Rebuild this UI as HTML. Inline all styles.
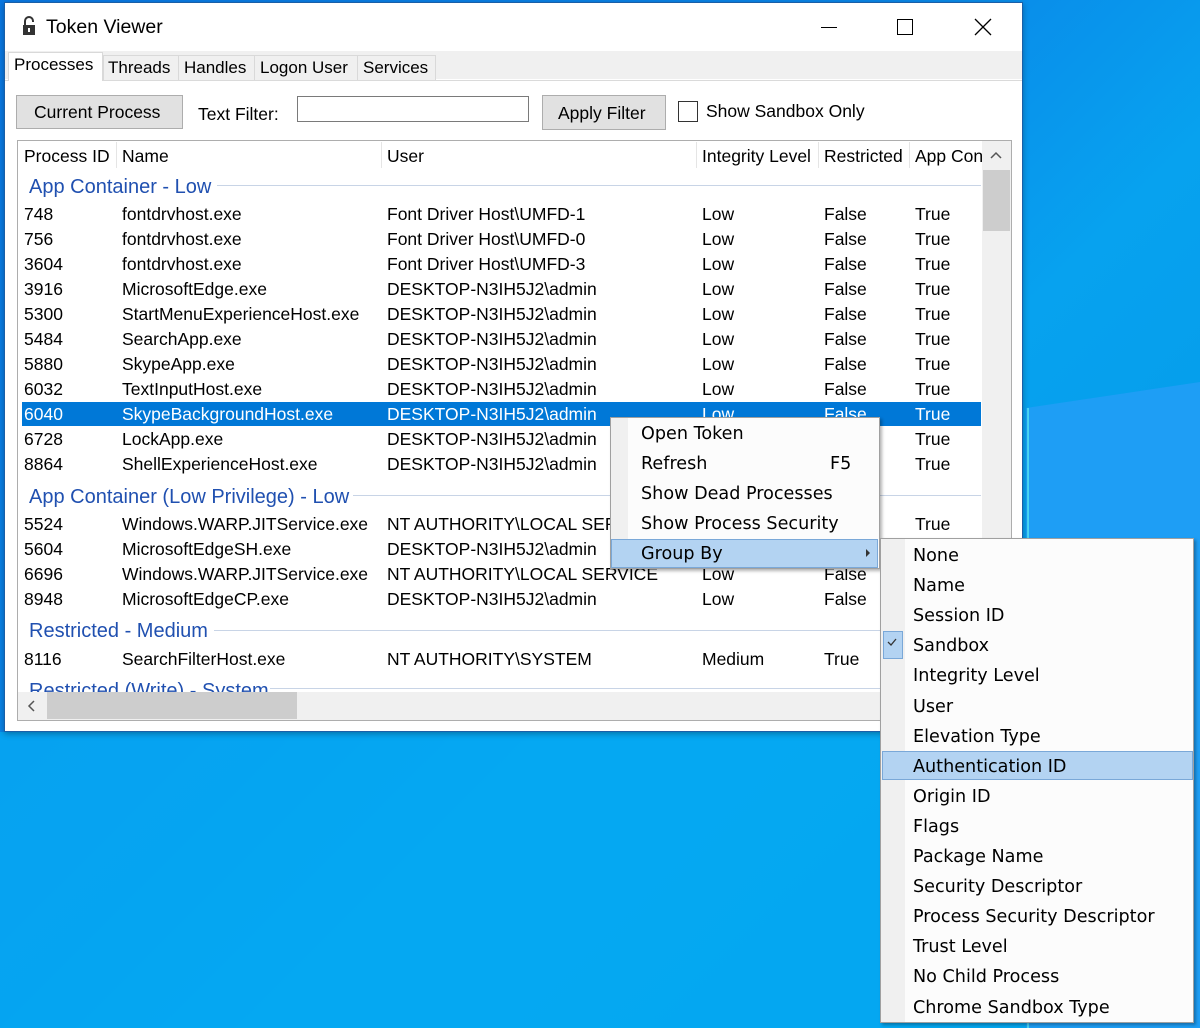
<!DOCTYPE html>
<html><head><style>
*{margin:0;padding:0;box-sizing:border-box}
body{width:1200px;height:1028px;overflow:hidden;position:relative;font-family:"Liberation Sans",sans-serif;background:linear-gradient(135deg,#0a78e2 0%,#0a86e8 40%,#07a2ef 60%,#0096e4 100%)}
.abs{position:absolute}
.t{position:absolute;font-size:17.5px;color:#000;white-space:nowrap;line-height:20px}
.g{position:absolute;font-size:20px;color:#2050b0;white-space:nowrap;line-height:22px}
.gl{position:absolute;height:1px;background:#c8d4e6}
.m{position:absolute;font-family:"DejaVu Sans","Liberation Sans",sans-serif;font-size:17.6px;color:#000;white-space:nowrap;line-height:22px}
</style></head><body>
<svg class="abs" style="left:0;top:0" width="1200" height="1028">
<polygon points="1026,408 1200,382 1200,1028 1026,1028" fill="#1e9ef5"/>
<line x1="1028" y1="408" x2="1028" y2="1028" stroke="#49d6f5" stroke-width="2"/>
<polygon points="0,732 1026,732 1026,1028 0,1028" fill="#05aaf2" opacity="0.8"/>
</svg>
<div class="abs" style="left:4px;top:2px;width:1019px;height:730px;background:#fff;border:1px solid #1a5fa8;box-shadow:0 2px 6px rgba(0,0,0,.3)"></div>
<svg class="abs" style="left:22px;top:16px" width="14" height="20"><path d="M3 10V5a4 4 0 0 1 8 0v1" stroke="#333" stroke-width="2" fill="none"/><rect x="1" y="9" width="12" height="10" fill="#333"/><rect x="6" y="12" width="2" height="4" fill="#fff"/></svg>
<div class="abs" style="left:46px;top:16px;font-size:19.5px;color:#000">Token Viewer</div>
<div class="abs" style="left:821px;top:27px;width:16px;height:1px;background:#000"></div>
<div class="abs" style="left:897px;top:19px;width:16px;height:16px;border:1px solid #000"></div>
<svg class="abs" style="left:974px;top:18px" width="18" height="18"><path d="M1 1L17 17M17 1L1 17" stroke="#000" stroke-width="1.3"/></svg>
<div class="abs" style="left:5px;top:51px;width:1017px;height:29px;background:#f0f0f0"></div>
<div class="abs" style="left:5px;top:79px;width:1017px;height:652px;background:#fff"></div>
<div class="abs" style="left:5px;top:80px;width:1017px;height:1px;background:#dadada"></div>
<div class="abs" style="left:8px;top:52px;width:95px;height:29px;background:#fff;border:1px solid #d9d9d9;border-bottom:none"></div>
<div class="t" style="left:14px;top:55px;font-size:17px">Processes</div>
<div class="abs" style="left:103px;top:55px;width:333px;height:25px;background:#f0f0f0;border:1px solid #d9d9d9;border-bottom:none"></div>
<div class="abs" style="left:178px;top:55px;width:1px;height:25px;background:#d9d9d9"></div>
<div class="abs" style="left:254px;top:55px;width:1px;height:25px;background:#d9d9d9"></div>
<div class="abs" style="left:357px;top:55px;width:1px;height:25px;background:#d9d9d9"></div>
<div class="t" style="left:108px;top:58px;font-size:17px">Threads</div>
<div class="t" style="left:184px;top:58px;font-size:17px">Handles</div>
<div class="t" style="left:260px;top:58px;font-size:17px">Logon User</div>
<div class="t" style="left:363px;top:58px;font-size:17px">Services</div>
<div class="abs" style="left:16px;top:95px;width:167px;height:34px;background:#e1e1e1;border:1px solid #adadad"></div>
<div class="t" style="left:34px;top:102px;font-size:17.5px">Current Process</div>
<div class="t" style="left:198px;top:104px;font-size:17.5px">Text Filter:</div>
<div class="abs" style="left:297px;top:96px;width:232px;height:26px;border:1px solid #7a7a7a;background:#fff"></div>
<div class="abs" style="left:542px;top:95px;width:124px;height:35px;background:#e1e1e1;border:1px solid #adadad"></div>
<div class="t" style="left:558px;top:103px;font-size:17.5px">Apply Filter</div>
<div class="abs" style="left:678px;top:101px;width:20px;height:21px;border:1px solid #333;background:#fff"></div>
<div class="t" style="left:706px;top:101px;font-size:17.5px">Show Sandbox Only</div>
<div class="abs" style="left:17px;top:140px;width:995px;height:581px;border:1px solid #adadad;background:#fff"></div>
<div class="t" style="left:24px;top:146px">Process ID</div><div class="abs" style="left:116px;top:142px;width:1px;height:26px;background:#e5e5e5"></div>
<div class="t" style="left:122px;top:146px">Name</div><div class="abs" style="left:381px;top:142px;width:1px;height:26px;background:#e5e5e5"></div>
<div class="t" style="left:387px;top:146px">User</div><div class="abs" style="left:696px;top:142px;width:1px;height:26px;background:#e5e5e5"></div>
<div class="t" style="left:702px;top:146px">Integrity Level</div><div class="abs" style="left:818px;top:142px;width:1px;height:26px;background:#e5e5e5"></div>
<div class="t" style="left:824px;top:146px">Restricted</div><div class="abs" style="left:909px;top:142px;width:1px;height:26px;background:#e5e5e5"></div>
<div class="abs" style="left:915px;top:146px;width:67px;overflow:hidden;font-size:17.5px;line-height:20px;white-space:nowrap">App Container</div>
<div class="abs" style="left:982px;top:141px;width:29px;height:551px;background:#f0f0f0"></div>
<svg class="abs" style="left:990px;top:151px" width="12" height="10"><path d="M1 7L6 2L11 7" stroke="#555" stroke-width="1.5" fill="none"/></svg>
<div class="abs" style="left:983px;top:170px;width:27px;height:61px;background:#cdcdcd"></div>
<div class="abs" style="left:18px;top:692px;width:964px;height:28px;background:#f0f0f0"></div>
<div class="abs" style="left:47px;top:692px;width:250px;height:27px;background:#cdcdcd"></div>
<svg class="abs" style="left:27px;top:699px" width="10" height="14"><path d="M7 2L2 7L7 12" stroke="#555" stroke-width="1.5" fill="none"/></svg>
<div class="abs" style="left:18px;top:170px;width:964px;height:522px;overflow:hidden">
<div class="abs" style="left:4px;top:232px;width:959px;height:24px;background:#0078d7"></div>
</div>
<div class="g" style="left:29px;top:176px">App Container - Low</div><div class="gl" style="left:217px;top:185px;width:764px"></div>
<div class="g" style="left:29px;top:486px">App Container (Low Privilege) - Low</div><div class="gl" style="left:353px;top:495px;width:628px"></div>
<div class="g" style="left:29px;top:620px">Restricted - Medium</div><div class="gl" style="left:214px;top:630px;width:767px"></div>
<div class="abs" style="left:18px;top:678px;width:964px;height:14px;overflow:hidden"><div class="g" style="left:11px;top:2px">Restricted (Write) - System</div><div class="gl" style="left:252px;top:10px;width:700px"></div></div>
<div id="rows"></div>
<script>
var R=[[204,"748","fontdrvhost.exe","Font Driver Host\\UMFD-1","Low","False","True"],
[229,"756","fontdrvhost.exe","Font Driver Host\\UMFD-0","Low","False","True"],
[254,"3604","fontdrvhost.exe","Font Driver Host\\UMFD-3","Low","False","True"],
[279,"3916","MicrosoftEdge.exe","DESKTOP-N3IH5J2\\admin","Low","False","True"],
[304,"5300","StartMenuExperienceHost.exe","DESKTOP-N3IH5J2\\admin","Low","False","True"],
[329,"5484","SearchApp.exe","DESKTOP-N3IH5J2\\admin","Low","False","True"],
[354,"5880","SkypeApp.exe","DESKTOP-N3IH5J2\\admin","Low","False","True"],
[379,"6032","TextInputHost.exe","DESKTOP-N3IH5J2\\admin","Low","False","True"],
[404,"6040","SkypeBackgroundHost.exe","DESKTOP-N3IH5J2\\admin","Low","False","True",1],
[429,"6728","LockApp.exe","DESKTOP-N3IH5J2\\admin","Low","False","True"],
[454,"8864","ShellExperienceHost.exe","DESKTOP-N3IH5J2\\admin","Low","False","True"],
[514,"5524","Windows.WARP.JITService.exe","NT AUTHORITY\\LOCAL SERVICE","Low","False","True"],
[539,"5604","MicrosoftEdgeSH.exe","DESKTOP-N3IH5J2\\admin","Low","False","True"],
[564,"6696","Windows.WARP.JITService.exe","NT AUTHORITY\\LOCAL SERVICE","Low","False","True"],
[589,"8948","MicrosoftEdgeCP.exe","DESKTOP-N3IH5J2\\admin","Low","False","True"],
[649,"8116","SearchFilterHost.exe","NT AUTHORITY\\SYSTEM","Medium","True","True"]];
var X=[24,122,387,702,824,915],h="";
R.forEach(function(r){for(var i=0;i<6;i++){var c=r[7]?"#fff":"#000";h+='<div class="t" style="left:'+X[i]+'px;top:'+r[0]+'px;color:'+c+'">'+r[i+1]+'</div>';}});
document.getElementById("rows").innerHTML=h;
</script>
<div class="abs" style="left:610px;top:417px;width:270px;height:152px;background:#f2f2f2;border:1px solid #a0a0a0;box-shadow:2px 2px 3px rgba(0,0,0,.3)"></div>
<div class="abs" style="left:611px;top:418px;width:17px;height:150px;background:#f0f0f0"></div>
<div class="abs" style="left:628px;top:418px;width:251px;height:150px;background:#fcfcfc"></div>
<div class="abs" style="left:611px;top:539px;width:267px;height:29px;background:#b3d3f2;border:1px solid #7aa8d8"></div>
<div class="m" style="left:641px;top:423px">Open Token</div>
<div class="m" style="left:641px;top:453px">Refresh</div><div class="m" style="left:830px;top:453px">F5</div>
<div class="m" style="left:641px;top:483px">Show Dead Processes</div>
<div class="m" style="left:641px;top:513px">Show Process Security</div>
<div class="m" style="left:641px;top:543px">Group By</div>
<svg class="abs" style="left:866px;top:549px" width="5" height="8"><path d="M0 0L4 4L0 8Z" fill="#333"/></svg>
<div class="abs" style="left:880px;top:538px;width:314px;height:485px;background:#fcfcfc;border:1px solid #a0a0a0;box-shadow:2px 2px 3px rgba(0,0,0,.3)"></div>
<div class="abs" style="left:881px;top:539px;width:24px;height:483px;background:#f0f0f0"></div>
<div class="abs" style="left:883px;top:631px;width:20px;height:28px;background:#b3d3f2;border:1px solid #7aa8d8"></div>
<svg class="abs" style="left:887px;top:638px" width="10" height="8"><path d="M1 4L4 7L9 1" stroke="#333" stroke-width="1.3" fill="none"/></svg>
<div class="abs" style="left:882px;top:751px;width:311px;height:29px;background:#b3d3f2;border:1px solid #7aa8d8"></div>
<div id="sub"></div>
<script>
var S=["None","Name","Session ID","Sandbox","Integrity Level","User","Elevation Type","Authentication ID","Origin ID","Flags","Package Name","Security Descriptor","Process Security Descriptor","Trust Level","No Child Process","Chrome Sandbox Type"],s="";
S.forEach(function(t,i){s+='<div class="m" style="left:913px;top:'+(545+i*30.1)+'px">'+t+'</div>';});
document.getElementById("sub").innerHTML=s;
</script>
</body></html>
